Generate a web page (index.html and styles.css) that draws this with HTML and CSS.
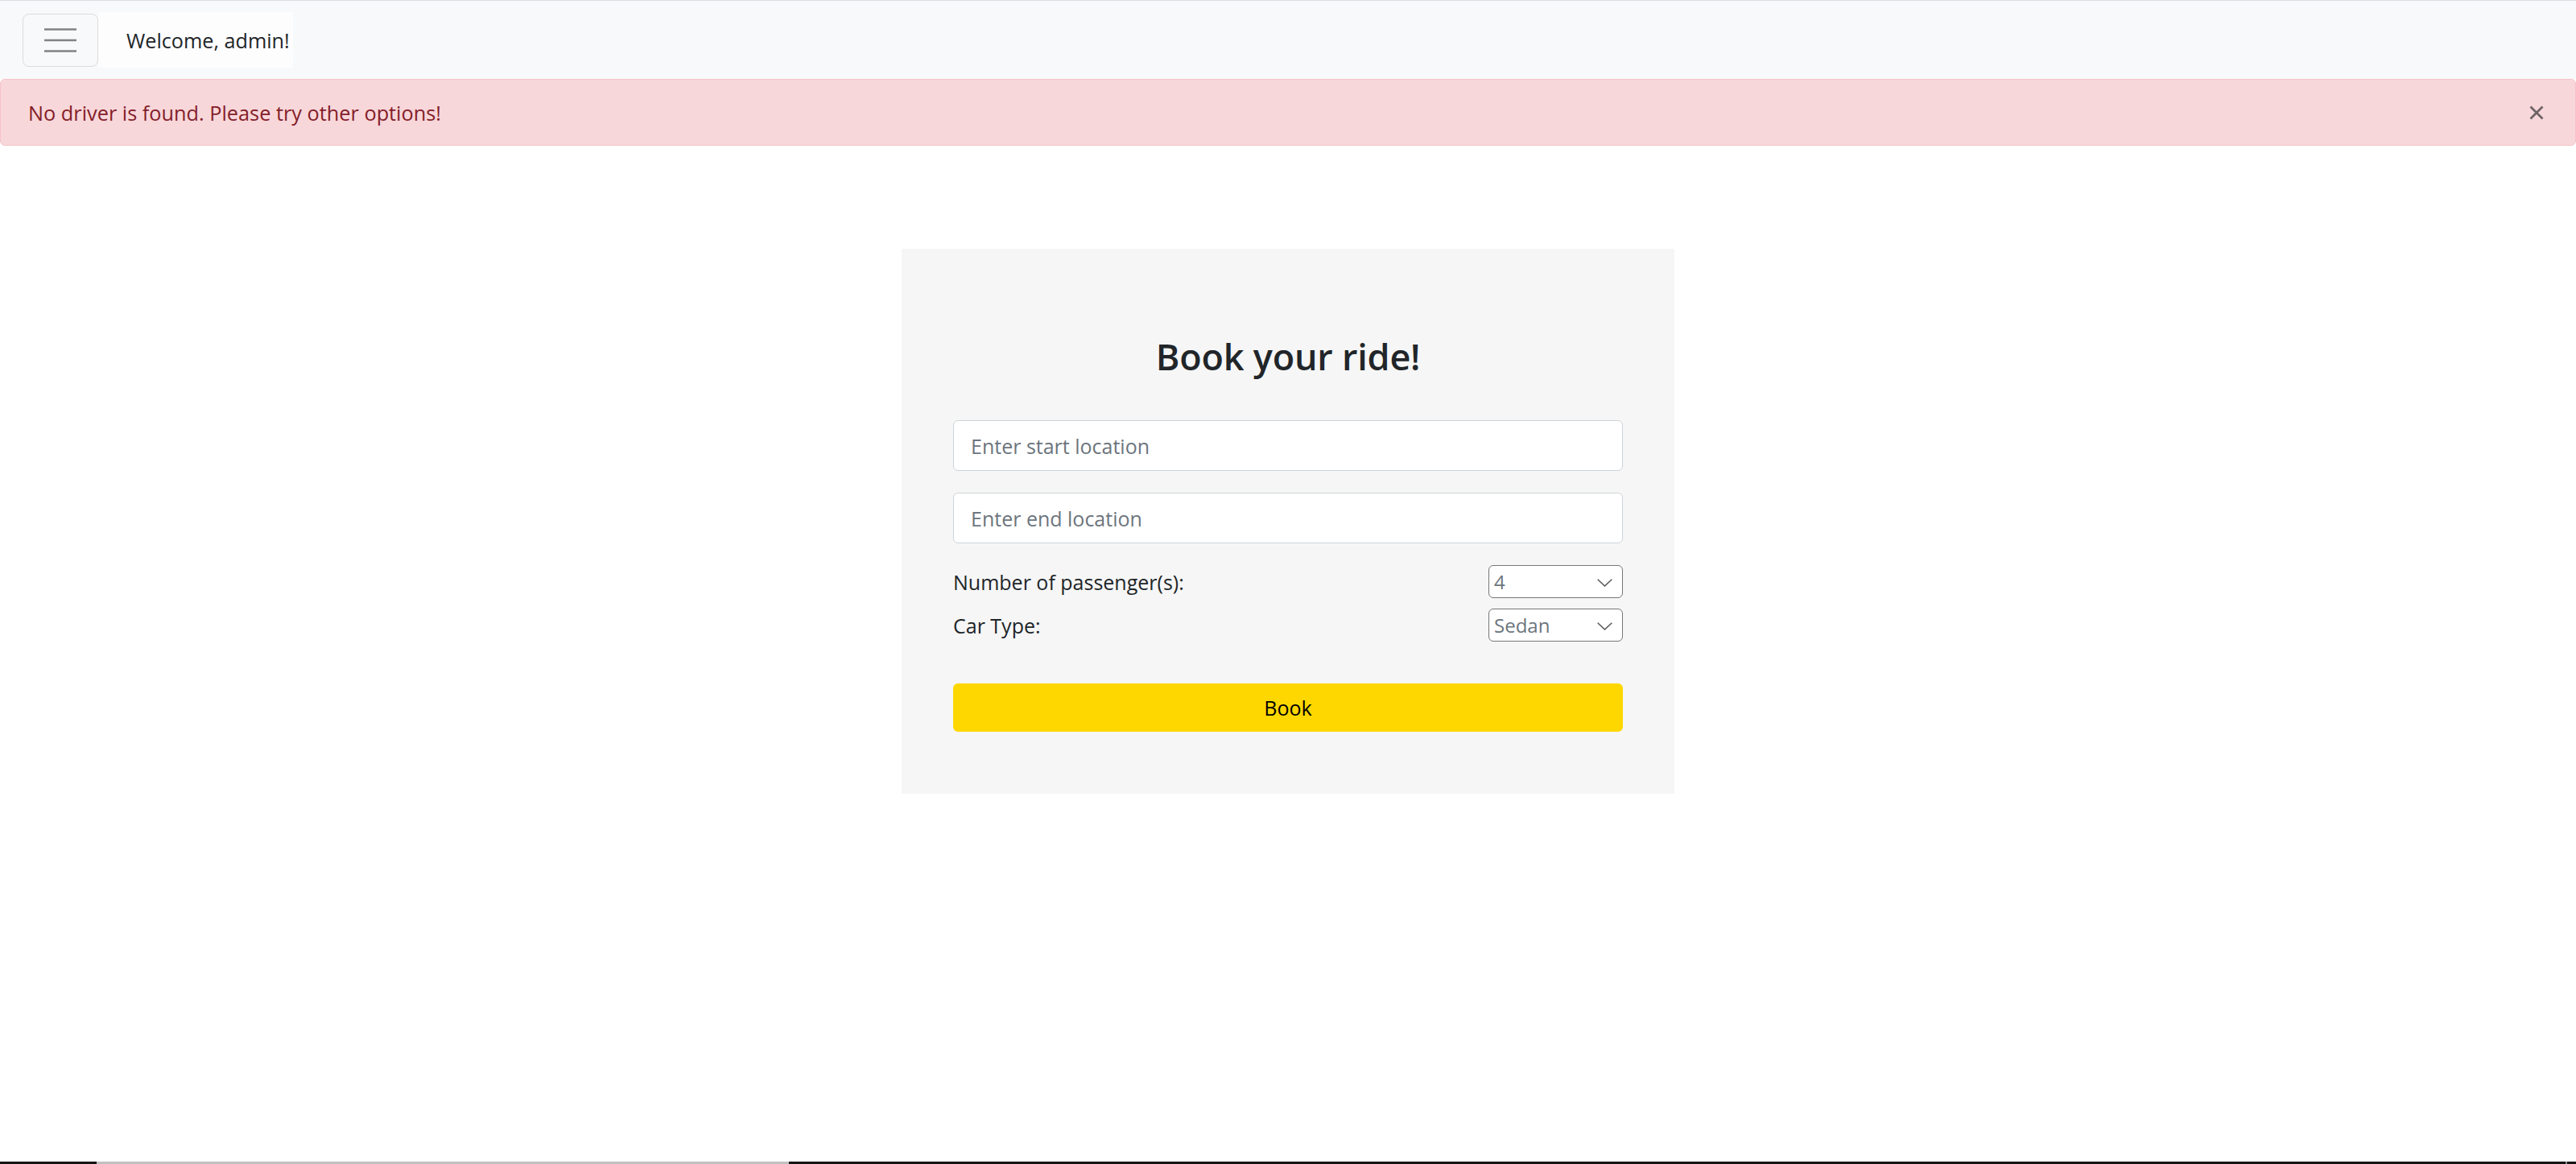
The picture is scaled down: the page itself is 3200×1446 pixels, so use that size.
FILE: index.html
```html
<!DOCTYPE html>
<html lang="en">
<head>
<meta charset="utf-8">
<title>Book your ride</title>
<link rel="stylesheet" href="styles.css">
</head>
<body>
<nav class="navbar">
  <button class="toggler" type="button" aria-label="Toggle navigation">
    <svg class="toggler-icon" width="40" height="30" viewBox="0 0 40 30"><path d="M0 1.5H40M0 15H40M0 28.5H40" stroke="rgba(0,0,0,0.48)" stroke-width="2.7" fill="none"/></svg>
  </button>
  <span class="welcome">Welcome, admin!</span>
</nav>
<div class="alert" role="alert">
  <span class="alert-text">No driver is found. Please try other options!</span>
  <button class="alert-close" type="button" aria-label="Close">
    <svg width="18" height="18" viewBox="0 0 18 18"><path d="M1.5 1.5L16.5 16.5M16.5 1.5L1.5 16.5" stroke="#6e6365" stroke-width="2.8" fill="none"/></svg>
  </button>
</div>
<main class="main">
  <form class="card">
    <h2 class="card-title">Book your ride!</h2>
    <input class="field" type="text" placeholder="Enter start location">
    <input class="field field-second" type="text" placeholder="Enter end location">
    <div class="row row-first">
      <label class="row-label">Number of passenger(s):</label>
      <div class="select-wrap">
        <select class="select"><option>4</option></select>
        <svg class="chevron" width="19" height="10" viewBox="0 0 19 10"><path d="M0.7 0.7L9.5 9L18.3 0.7" stroke="#555" stroke-width="1.5" fill="none"/></svg>
      </div>
    </div>
    <div class="row">
      <label class="row-label">Car Type:</label>
      <div class="select-wrap">
        <select class="select"><option>Sedan</option></select>
        <svg class="chevron" width="19" height="10" viewBox="0 0 19 10"><path d="M0.7 0.7L9.5 9L18.3 0.7" stroke="#555" stroke-width="1.5" fill="none"/></svg>
      </div>
    </div>
    <button class="book" type="button">Book</button>
  </form>
</main>
<div class="hscroll"><div class="hscroll-thumb"></div><div class="hscroll-end"></div></div>
</body>
</html>
```
FILE: styles.css
```css
* { box-sizing: border-box; }
html, body { height: 100%; }
body {
  margin: 0;
  font-family: "Open Sans", "Noto Sans", sans-serif;
  color: #212529;
  background: #fff;
  display: flex;
  flex-direction: column;
  min-height: 100vh;
}
.navbar {
  height: 98px;
  border-top: 1px solid #dadde1;
  background: #f8f9fa;
  display: flex;
  align-items: center;
  padding-left: 28px;
}
.toggler {
  width: 94px;
  height: 66px;
  border: 1px solid #dcdcdc;
  border-radius: 8px;
  background: transparent;
  display: flex;
  align-items: center;
  justify-content: center;
  padding: 0;
}
.toggler-icon { display: block; }
.welcome {
  height: 69px;
  display: flex;
  align-items: center;
  padding: 0 4px 0 35px;
  background: #fdfdfe;
  font-size: 25.2px;
  color: #212529;
}
.alert {
  height: 83px;
  background: #f8d7da;
  border: 1px solid #f5c2c7;
  border-radius: 6px;
  color: #842029;
  display: flex;
  align-items: center;
  justify-content: space-between;
  padding: 0 39px 0 34px;
  font-size: 25.3px;
}
.alert-close {
  border: none;
  background: transparent;
  padding: 0;
  width: 18px;
  height: 18px;
  display: flex;
}
.main {
  display: flex;
  justify-content: center;
  padding-top: 128px;
}
.card {
  width: 960px;
  height: 677px;
  background: #f6f6f6;
  padding: 64px 64px 0;
  display: flex;
  flex-direction: column;
}
.card-title {
  margin: 42px 0 52px;
  font-size: 45px;
  font-weight: 600;
  line-height: 55px;
  text-align: center;
  color: #212529;
  letter-spacing: -0.2px;
}
.field {
  height: 63px;
  width: 100%;
  border: 1px solid #ced4da;
  border-radius: 6px;
  background: #fff;
  padding: 0 21px;
  font-family: inherit;
  font-size: 25px;
  color: #212529;
}
.field::placeholder { color: #6c757d; }
.field-second { margin-top: 27px; }
.row {
  display: flex;
  justify-content: space-between;
  align-items: center;
  margin-top: 13px;
  height: 41px;
}
.row-first { margin-top: 27px; }
.row-label { font-size: 25px; color: #212529; }
.select-wrap { position: relative; width: 167px; height: 41px; }
.select {
  appearance: none;
  -webkit-appearance: none;
  width: 100%;
  height: 100%;
  border: 1px solid #767676;
  border-radius: 6px;
  background: #fff;
  padding: 0 0 0 6px;
  font-family: inherit;
  font-size: 24px;
  color: #6c757d;
}
.chevron {
  position: absolute;
  right: 13px;
  top: 17px;
  pointer-events: none;
}
.book {
  margin-top: 52px;
  height: 60px;
  width: 100%;
  border: none;
  border-radius: 6px;
  background: #ffd700;
  font-family: inherit;
  font-size: 25px;
  color: #000;
}
.hscroll {
  margin-top: auto;
  height: 3px;
  background: #151515;
  display: flex;
}
.hscroll-thumb {
  margin-left: 120px;
  width: 860px;
  background: #c1c1c1;
}
.hscroll-end {
  margin-left: auto;
  margin-right: 11px;
  width: 2px;
  background: #888;
}
```
